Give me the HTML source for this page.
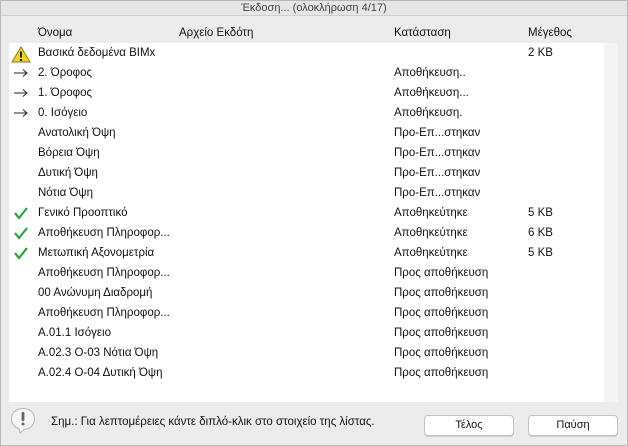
<!DOCTYPE html>
<html><head><meta charset="utf-8"><style>
*{margin:0;padding:0;box-sizing:border-box}
body{width:628px;height:446px;background:#ececec;font-family:"Liberation Sans","DejaVu Sans",sans-serif;font-size:11.5px;color:#111;position:relative;overflow:hidden;border:1px solid #b8b8b8}
.title{position:absolute;left:0;top:0;width:626px;height:15px;background:#e6e6e6;border-bottom:1px solid #cfcfcf;text-align:center;line-height:14px;font-size:11px;color:#444}
.hdr{position:absolute;top:26px}
.list{position:absolute;left:8px;top:42px;width:595px;height:359px;background:#fff}
.sb{position:absolute;left:603px;top:42px;width:14px;height:359px;background:#f4f4f4}
.row{position:absolute;left:0;width:595px;height:20px;line-height:20px}
.row span{position:absolute;white-space:nowrap}
.c1{left:29px}.c3{left:385px}.c4{left:519px}
.ic{position:absolute;left:2px;top:3px}
.ar{position:absolute;left:4px;top:5px}
.btn{position:absolute;top:414px;width:90px;height:21px;background:#fff;border:1px solid #c4c4c4;border-radius:4px;text-align:center;line-height:19px;font-size:11px;box-shadow:0 1px 0 #d0d0d0}
</style></head><body>
<div class="title">Έκδοση... (ολοκλήρωση 4/17)</div>
<div class="hdr" style="left:37px">Όνομα</div>
<div class="hdr" style="left:178px">Αρχείο Εκδότη</div>
<div class="hdr" style="left:393px">Κατάσταση</div>
<div class="hdr" style="left:527px">Μέγεθος</div>
<div class="sb"></div>
<div class="list">
<div class="row" style="top:0"><svg class="ic" width="20" height="17" viewBox="0 0 20 17"><path d="M10 1 L19 16 L1 16 Z" fill="#f5d31a" stroke="#8a7a20" stroke-width="1"/><rect x="9" y="5.5" width="2" height="6" fill="#222"/><rect x="9" y="13" width="2" height="2" fill="#222"/></svg><span class="c1">Βασικά δεδομένα BIMx</span><span class="c4">2 KB</span></div>
<div class="row" style="top:20px"><svg class="ar" width="16" height="10" viewBox="0 0 16 10"><path d="M1 5 H14 M10 1.5 L14 5 L10 8.5" fill="none" stroke="#222" stroke-width="1"/></svg><span class="c1">2. Όροφος</span><span class="c3">Αποθήκευση..</span></div>
<div class="row" style="top:40px"><svg class="ar" width="16" height="10" viewBox="0 0 16 10"><path d="M1 5 H14 M10 1.5 L14 5 L10 8.5" fill="none" stroke="#222" stroke-width="1"/></svg><span class="c1">1. Όροφος</span><span class="c3">Αποθήκευση...</span></div>
<div class="row" style="top:60px"><svg class="ar" width="16" height="10" viewBox="0 0 16 10"><path d="M1 5 H14 M10 1.5 L14 5 L10 8.5" fill="none" stroke="#222" stroke-width="1"/></svg><span class="c1">0. Ισόγειο</span><span class="c3">Αποθήκευση.</span></div>
<div class="row" style="top:80px"><span class="c1">Ανατολική Όψη</span><span class="c3">Προ-Επ...στηκαν</span></div>
<div class="row" style="top:100px"><span class="c1">Βόρεια Όψη</span><span class="c3">Προ-Επ...στηκαν</span></div>
<div class="row" style="top:120px"><span class="c1">Δυτική Όψη</span><span class="c3">Προ-Επ...στηκαν</span></div>
<div class="row" style="top:140px"><span class="c1">Νότια Όψη</span><span class="c3">Προ-Επ...στηκαν</span></div>
<div class="row" style="top:160px"><svg class="ic" width="16" height="14" viewBox="0 0 16 14" style="left:4px"><path d="M2 7 L6 12 L14 2" fill="none" stroke="#2aa33a" stroke-width="2.2"/></svg><span class="c1">Γενικό Προοπτικό</span><span class="c3">Αποθηκεύτηκε</span><span class="c4">5 KB</span></div>
<div class="row" style="top:180px"><svg class="ic" width="16" height="14" viewBox="0 0 16 14" style="left:4px"><path d="M2 7 L6 12 L14 2" fill="none" stroke="#2aa33a" stroke-width="2.2"/></svg><span class="c1">Αποθήκευση Πληροφορ...</span><span class="c3">Αποθηκεύτηκε</span><span class="c4">6 KB</span></div>
<div class="row" style="top:200px"><svg class="ic" width="16" height="14" viewBox="0 0 16 14" style="left:4px"><path d="M2 7 L6 12 L14 2" fill="none" stroke="#2aa33a" stroke-width="2.2"/></svg><span class="c1">Μετωπική Αξονομετρία</span><span class="c3">Αποθηκεύτηκε</span><span class="c4">5 KB</span></div>
<div class="row" style="top:220px"><span class="c1">Αποθήκευση Πληροφορ...</span><span class="c3">Προς αποθήκευση</span></div>
<div class="row" style="top:240px"><span class="c1">00 Ανώνυμη Διαδρομή</span><span class="c3">Προς αποθήκευση</span></div>
<div class="row" style="top:260px"><span class="c1">Αποθήκευση Πληροφορ...</span><span class="c3">Προς αποθήκευση</span></div>
<div class="row" style="top:280px"><span class="c1">A.01.1 Ισόγειο</span><span class="c3">Προς αποθήκευση</span></div>
<div class="row" style="top:300px"><span class="c1">A.02.3 Ο-03 Νότια Όψη</span><span class="c3">Προς αποθήκευση</span></div>
<div class="row" style="top:320px"><span class="c1">A.02.4 Ο-04 Δυτική Όψη</span><span class="c3">Προς αποθήκευση</span></div>
</div>
<svg style="position:absolute;left:9px;top:406px" width="26" height="27" viewBox="0 0 26 27"><path d="M13 1.5 C6 1.5 1.5 6 1.5 12 C1.5 17 5 20.5 9 21.5 L10 26 L14 22.5 C20 22 24.5 18 24.5 12 C24.5 6 20 1.5 13 1.5 Z" fill="#f6f6f6" stroke="#b5b5b5"/><rect x="11.6" y="5" width="2.8" height="9" rx="1" fill="#666"/><circle cx="13" cy="17" r="1.5" fill="#666"/></svg>
<div style="position:absolute;left:50px;top:414px;line-height:14px">Σημ.: Για λεπτομέρειες κάντε διπλό-κλικ στο στοιχείο της λίστας.</div>
<div class="btn" style="left:423px">Τέλος</div>
<div class="btn" style="left:527px">Παύση</div>
</body></html>
